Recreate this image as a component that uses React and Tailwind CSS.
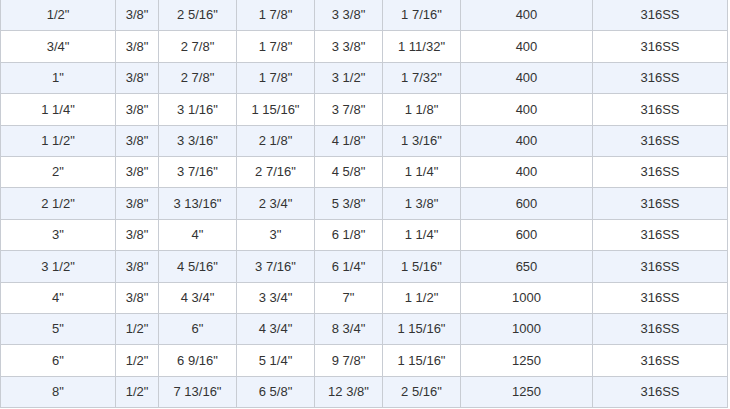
import React from "react";

const rows = [
  ["1/2\"", "3/8\"", "2 5/16\"", "1 7/8\"", "3 3/8\"", "1 7/16\"", "400", "316SS"],
  ["3/4\"", "3/8\"", "2 7/8\"", "1 7/8\"", "3 3/8\"", "1 11/32\"", "400", "316SS"],
  ["1\"", "3/8\"", "2 7/8\"", "1 7/8\"", "3 1/2\"", "1 7/32\"", "400", "316SS"],
  ["1 1/4\"", "3/8\"", "3 1/16\"", "1 15/16\"", "3 7/8\"", "1 1/8\"", "400", "316SS"],
  ["1 1/2\"", "3/8\"", "3 3/16\"", "2 1/8\"", "4 1/8\"", "1 3/16\"", "400", "316SS"],
  ["2\"", "3/8\"", "3 7/16\"", "2 7/16\"", "4 5/8\"", "1 1/4\"", "400", "316SS"],
  ["2 1/2\"", "3/8\"", "3 13/16\"", "2 3/4\"", "5 3/8\"", "1 3/8\"", "600", "316SS"],
  ["3\"", "3/8\"", "4\"", "3\"", "6 1/8\"", "1 1/4\"", "600", "316SS"],
  ["3 1/2\"", "3/8\"", "4 5/16\"", "3 7/16\"", "6 1/4\"", "1 5/16\"", "650", "316SS"],
  ["4\"", "3/8\"", "4 3/4\"", "3 3/4\"", "7\"", "1 1/2\"", "1000", "316SS"],
  ["5\"", "1/2\"", "6\"", "4 3/4\"", "8 3/4\"", "1 15/16\"", "1000", "316SS"],
  ["6\"", "1/2\"", "6 9/16\"", "5 1/4\"", "9 7/8\"", "1 15/16\"", "1250", "316SS"],
  ["8\"", "1/2\"", "7 13/16\"", "6 5/8\"", "12 3/8\"", "2 5/16\"", "1250", "316SS"],
];

const widths = [115, 43, 78, 78, 68, 78, 132, 135];

export default function App() {
  return (
    <div className="w-[730px] h-[409px] overflow-hidden bg-white">
      <table
        className="-mt-[1px] border-collapse table-fixed w-[728px] text-[13px] text-[#333333]"
        style={{ fontFamily: '"Liberation Sans", Arial, sans-serif' }}
      >
        <colgroup>
          {widths.map((w, i) => (
            <col key={i} style={{ width: w }} />
          ))}
        </colgroup>
        <tbody>
          {rows.map((r, i) => (
            <tr key={i} className={`h-[31.4px] ${i % 2 === 0 ? "bg-[#eef3fc]" : "bg-white"}`}>
              {r.map((c, j) => (
                <td key={j} className="border border-[#c8ccd3] text-center p-0 align-middle">
                  {c}
                </td>
              ))}
            </tr>
          ))}
        </tbody>
      </table>
    </div>
  );
}
